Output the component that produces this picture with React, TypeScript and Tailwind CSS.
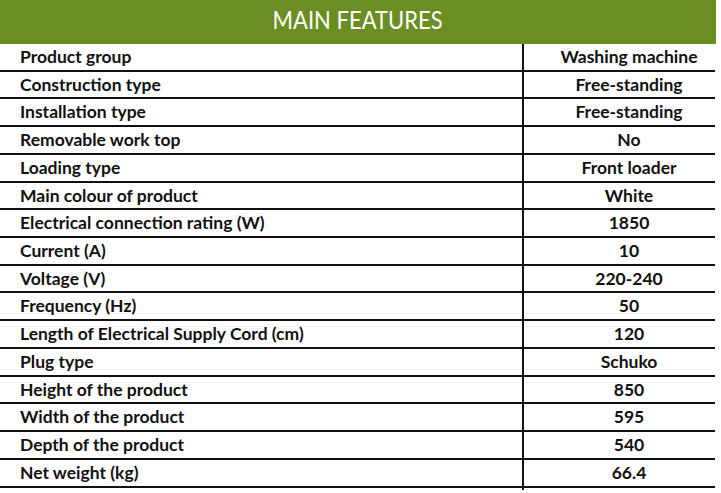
import * as React from "react";

const rows: [string, string][] = [
  ["Product group", "Washing machine"],
  ["Construction type", "Free-standing"],
  ["Installation type", "Free-standing"],
  ["Removable work top", "No"],
  ["Loading type", "Front loader"],
  ["Main colour of product", "White"],
  ["Electrical connection rating (W)", "1850"],
  ["Current (A)", "10"],
  ["Voltage (V)", "220-240"],
  ["Frequency (Hz)", "50"],
  ["Length of Electrical Supply Cord (cm)", "120"],
  ["Plug type", "Schuko"],
  ["Height of the product", "850"],
  ["Width of the product", "595"],
  ["Depth of the product", "540"],
  ["Net weight (kg)", "66.4"],
];

export default function App() {
  return (
    <div className="h-[493px] w-[721px] overflow-hidden bg-white text-[#111] font-['Lato','Liberation_Sans',sans-serif]">
      <div className="w-[716px] h-[44px] bg-[#6b8e23] flex items-center justify-center">
        <h1 className="text-[25px] leading-none text-white scale-x-[0.88] pb-[6px]">MAIN FEATURES</h1>
      </div>
      <div className="w-[715px] font-bold text-[17.5px]">
        {rows.map(([label, value]) => (
          <div key={label} className="grid grid-cols-[524px_191px] h-[27.73px] border-b-2 border-[#111]">
            <div className="border-r-2 border-[#111] pl-[20px] flex items-center pb-[4px]">{label}</div>
            <div className="pl-[19px] flex items-center justify-center pb-[4px]">{value}</div>
          </div>
        ))}
      </div>
    </div>
  );
}
